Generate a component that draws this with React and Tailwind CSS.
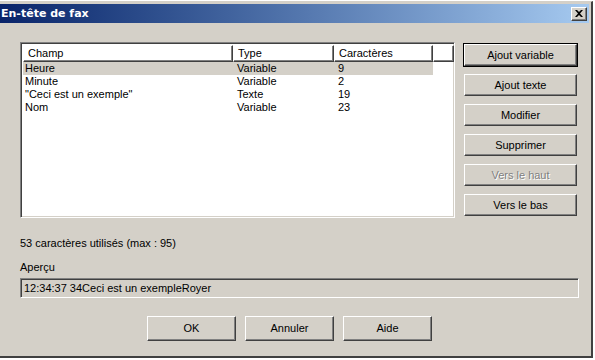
import React from 'react';

const rows = [
  { champ: 'Heure', type: 'Variable', chars: '9', selected: true },
  { champ: 'Minute', type: 'Variable', chars: '2' },
  { champ: '"Ceci est un exemple"', type: 'Texte', chars: '19' },
  { champ: 'Nom', type: 'Variable', chars: '23' },
];

const raised =
  'border border-t-white border-l-white border-r-[#404040] border-b-[#404040] shadow-[inset_-1px_-1px_0_#808080]';

function SideButton({ label, disabled, isDefault }) {
  return (
    <div className={isDefault ? 'border border-black' : 'border border-transparent'}>
      <div className={`${raised} h-[22px] flex items-center justify-center`}>
        {disabled ? (
          <span className="text-[#808080] [text-shadow:1px_1px_0_#ffffff]">{label}</span>
        ) : (
          <span>{label}</span>
        )}
      </div>
    </div>
  );
}

function HeaderCell({ label, width }) {
  return (
    <div className={`${raised} h-[17px] flex items-center pl-[4px] shrink-0`} style={{ width }}>
      {label}
    </div>
  );
}

export default function App() {
  return (
    <div className="w-[595px] h-[360px] bg-white overflow-hidden font-['Liberation_Sans',Arial,sans-serif] text-[11px] text-black leading-none">
      <div className="mt-[1px] w-[593px] h-[357px] bg-[#d4d0c8] border-t border-r-2 border-b-2 border-t-[#d4d0c8] border-r-[#404040] border-b-[#404040] flex flex-col">
        {/* title bar */}
        <div className="mt-[2px] mr-[2px] h-[19px] bg-gradient-to-r from-[#0a246a] to-[#a6caf0] flex items-center justify-between">
          <span className="pl-[1px] font-['DejaVu_Sans',sans-serif] font-bold text-[11px] text-white">En-tête de fax</span>
          <div className={`${raised} w-[16px] h-[14px] bg-[#d4d0c8] mr-[2px] flex items-center justify-center`}>
            <svg width="8" height="7" viewBox="0 0 8 7">
              <path d="M0 0h2l2 2 2-2h2L5 3.5 8 7H6L4 5 2 7H0l3-3.5z" fill="#000" />
            </svg>
          </div>
        </div>

        <div className="flex flex-col pl-[20px] pr-[13px] pt-[19px]">
          <div className="flex gap-[8px]">
            {/* list view */}
            <div className="w-[435px] h-[176px] border border-t-[#808080] border-l-[#808080] border-r-white border-b-white shadow-[inset_1px_1px_0_#404040,inset_-1px_-1px_0_#d4d0c8] bg-white p-[2px]">
              <div className="flex">
                <HeaderCell label="Champ" width={210} />
                <HeaderCell label="Type" width={101} />
                <HeaderCell label="Caractères" width={99} />
                <HeaderCell label="" width={21} />
              </div>
              <div className="flex flex-col">
                {rows.map((r) => (
                  <div
                    key={r.champ}
                    className={`flex h-[13px] items-center w-[410px] ${r.selected ? 'bg-[#d4d0c8]' : ''}`}
                  >
                    <span className="w-[210px] pl-[2px]">{r.champ}</span>
                    <span className="w-[101px] pl-[4px]">{r.type}</span>
                    <span className="w-[99px] pl-[4px]">{r.chars}</span>
                  </div>
                ))}
              </div>
            </div>

            {/* side buttons */}
            <div className="w-[116px] pt-[1px] flex flex-col gap-[6px]">
              <SideButton label="Ajout variable" isDefault />
              <SideButton label="Ajout texte" />
              <SideButton label="Modifier" />
              <SideButton label="Supprimer" />
              <SideButton label="Vers le haut" disabled />
              <SideButton label="Vers le bas" />
            </div>
          </div>

          <div className="mt-[20px]">53 caractères utilisés (max : 95)</div>
          <div className="mt-[13px]">Aperçu</div>
          <div className="mt-[5px] w-[559px] h-[20px] border border-t-[#808080] border-l-[#808080] border-r-white border-b-white shadow-[inset_1px_1px_0_#404040] flex items-center pl-[3px]">
            12:34:37 34Ceci est un exempleRoyer
          </div>

          <div className="mt-[18px] flex gap-[9px] pl-[127px]">
            {['OK', 'Annuler', 'Aide'].map((l) => (
              <div key={l} className={`${raised} w-[89px] h-[25px] flex items-center justify-center`}>
                {l}
              </div>
            ))}
          </div>
        </div>
      </div>
    </div>
  );
}
